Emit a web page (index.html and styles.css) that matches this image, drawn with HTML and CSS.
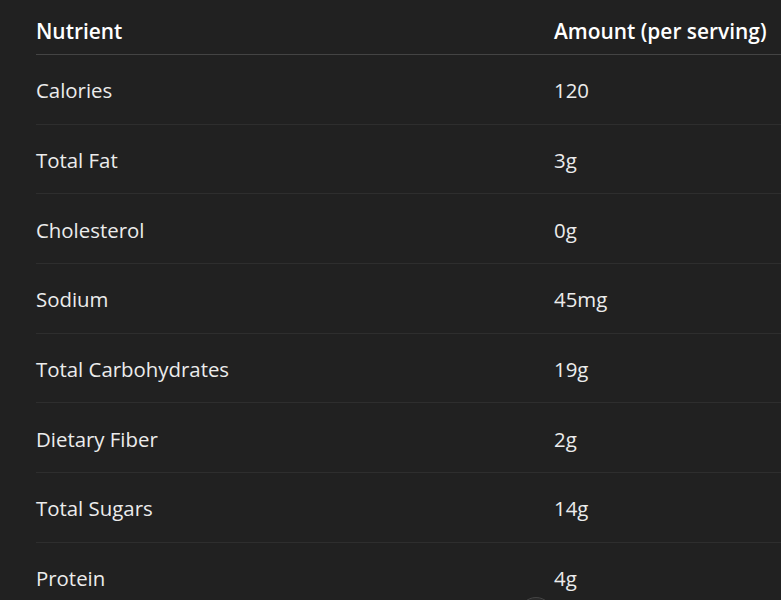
FILE: index.html
```html
<!DOCTYPE html>
<html lang="en">
<head>
<meta charset="utf-8">
<title>Nutrition</title>
<link rel="stylesheet" href="styles.css">
</head>
<body>
<div class="wrap">
  <table class="nutri">
    <thead>
      <tr><th class="c1">Nutrient</th><th>Amount (per serving)</th></tr>
    </thead>
    <tbody>
      <tr><td class="c1">Calories</td><td>120</td></tr>
      <tr><td class="c1">Total Fat</td><td>3g</td></tr>
      <tr><td class="c1">Cholesterol</td><td>0g</td></tr>
      <tr><td class="c1">Sodium</td><td>45mg</td></tr>
      <tr><td class="c1">Total Carbohydrates</td><td>19g</td></tr>
      <tr><td class="c1">Dietary Fiber</td><td>2g</td></tr>
      <tr><td class="c1">Total Sugars</td><td>14g</td></tr>
      <tr><td class="c1">Protein</td><td>4g</td></tr>
    </tbody>
  </table>
</div>
<div class="scroll-btn"></div>
</body>
</html>
```
FILE: styles.css
```css
html, body {
  margin: 0;
  padding: 0;
  background: #212121;
  height: 100%;
  overflow: hidden;
}
body {
  font-family: "Open Sans", "Noto Sans", sans-serif;
  color: #ececec;
  font-size: 20.4px;
}
.wrap {
  padding-left: 36px;
}
.nutri {
  border-collapse: collapse;
  width: 745px;
  table-layout: fixed;
}
.nutri th, .nutri td {
  text-align: left;
  padding: 0;
  line-height: 28px;
}
.nutri .c1 {
  width: 518px;
}
.nutri th {
  font-weight: 600;
  font-size: 20.9px;
  color: #ffffff;
  padding-top: 17px;
  padding-bottom: 9px;
  border-bottom: 1px solid #444444;
}
.nutri td {
  padding-top: 21.33px;
  padding-bottom: 19.33px;
  border-bottom: 1px solid #2e2e2e;
}
.scroll-btn {
  position: absolute;
  left: 519px;
  top: 597px;
  width: 32px;
  height: 32px;
  border-radius: 50%;
  background: #2a2a2a;
  border: 1px solid #444444;
}
```
